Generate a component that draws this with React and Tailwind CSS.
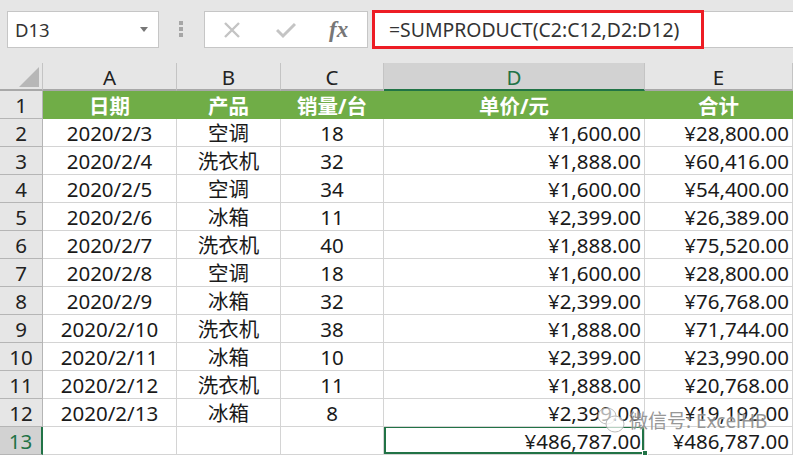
const ROWS = [
  ['2020/2/3', '空调', '18', '¥1,600.00', '¥28,800.00'],
  ['2020/2/4', '洗衣机', '32', '¥1,888.00', '¥60,416.00'],
  ['2020/2/5', '空调', '34', '¥1,600.00', '¥54,400.00'],
  ['2020/2/6', '冰箱', '11', '¥2,399.00', '¥26,389.00'],
  ['2020/2/7', '洗衣机', '40', '¥1,888.00', '¥75,520.00'],
  ['2020/2/8', '空调', '18', '¥1,600.00', '¥28,800.00'],
  ['2020/2/9', '冰箱', '32', '¥2,399.00', '¥76,768.00'],
  ['2020/2/10', '洗衣机', '38', '¥1,888.00', '¥71,744.00'],
  ['2020/2/11', '冰箱', '10', '¥2,399.00', '¥23,990.00'],
  ['2020/2/12', '洗衣机', '11', '¥1,888.00', '¥20,768.00'],
  ['2020/2/13', '冰箱', '8', '¥2,399.00', '¥19,192.00'],
];

const FONT = "font-['Noto_Sans','Noto_Sans_CJK_SC',sans-serif]";
const CELL = 'h-7 pt-[2px] border-r border-b border-[#d4d4d4] flex items-center text-[20.5px] leading-none text-[#1a1a1a] overflow-hidden whitespace-nowrap';
const ROW_HEAD = 'h-7 pt-[2px] bg-[#e6e6e6] border-r border-b border-[#b5b5b5] flex items-center justify-center text-[20.5px] leading-none text-[#222]';
const COL_HEAD = 'h-7 pt-[2px] bg-[#e6e6e6] border-r border-[#c4c4c4] flex items-center justify-center text-[20.5px] leading-none text-[#222] border-b-2 border-b-[#a8a8a8]';
const TITLE = 'h-7 pt-[2px] bg-[#70ad47] border-r border-[#70ad47] flex items-center justify-center text-[20.5px] leading-none font-bold text-white';

function Toolbar() {
  return (
    <div className="h-[63px] bg-[#e6e6e6] flex items-start pt-[11px]">
      {/* Name box */}
      <div className="ml-[7px] w-[152px] h-[37px] bg-white border border-[#c6c6c6] flex items-center justify-between pl-[7px] pr-[10px] text-[18.5px] text-[#333]">
        <span>D13</span>
        <span className="w-0 h-0 border-l-[4px] border-r-[4px] border-t-[5px] border-l-transparent border-r-transparent border-t-[#777]" />
      </div>
      {/* Grip dots */}
      <div className="ml-[20px] mt-[10px] flex flex-col gap-[2px]">
        <span className="w-1 h-1 bg-[#a6a6a6]" />
        <span className="w-1 h-1 bg-[#a6a6a6]" />
        <span className="w-1 h-1 bg-[#a6a6a6]" />
      </div>
      {/* Cancel / confirm / function buttons */}
      <div className="ml-[21px] w-[164px] h-[37px] bg-white border border-[#c6c6c6] relative flex items-center">
        <svg width="18" height="18" viewBox="0 0 18 18" className="ml-[18px]">
          <path d="M2 2 L16 16 M16 2 L2 16" stroke="#c4c4c4" strokeWidth="2.4" fill="none" />
        </svg>
        <svg width="20" height="18" viewBox="0 0 20 18" className="ml-[35px]">
          <path d="M1 9 L7 15 L19 3" stroke="#c4c4c4" strokeWidth="3" fill="none" />
        </svg>
        <span className="ml-[33px] font-['Liberation_Serif',serif] italic font-bold text-[23px] leading-none text-[#777]">fx</span>
      </div>
      {/* Formula bar */}
      <div className="ml-[4px] flex-1 h-[37px] bg-white border-y border-[#c6c6c6] relative">
        <div className="absolute left-0 top-[-2px] w-[332px] h-[39px] border-[3px] border-[#ed1c24] flex items-center pl-[14px] text-[19.4px] text-[#333] whitespace-nowrap">
          =SUMPRODUCT(C2:C12,D2:D12)
        </div>
      </div>
    </div>
  );
}

export default function App() {
  return (
    <div className={`w-[793px] h-[456px] overflow-hidden relative bg-white ${FONT}`}>
      <Toolbar />
      <div className="grid grid-cols-[43px_134px_104px_103px_261px_148px]">
        {/* Column headers */}
        <div className="h-7 bg-[#e6e6e6] border-r border-[#c4c4c4] border-b-2 border-b-[#a8a8a8] flex items-end justify-end pr-[3px] pb-[2px]">
          <svg width="20" height="20" viewBox="0 0 20 20">
            <path d="M20 0 V20 H0 Z" fill="#b7b7b7" />
          </svg>
        </div>
        <div className={COL_HEAD}>A</div>
        <div className={COL_HEAD}>B</div>
        <div className={COL_HEAD}>C</div>
        <div className="h-7 pt-[2px] bg-[#d2d2d2] border-r border-[#c4c4c4] border-b-2 border-b-[#217346] flex items-center justify-center text-[20.5px] leading-none text-[#217346]">D</div>
        <div className={COL_HEAD}>E</div>

        {/* Title row */}
        <div className={ROW_HEAD}>1</div>
        <div className={TITLE}>日期</div>
        <div className={TITLE}>产品</div>
        <div className={TITLE}>销量/台</div>
        <div className={TITLE}>单价/元</div>
        <div className={TITLE}>合计</div>

        {ROWS.map((row, idx) => (
          <div key={row[0]} className="contents">
            <div className={ROW_HEAD}>{idx + 2}</div>
            <div className={`${CELL} justify-center`}>{row[0]}</div>
            <div className={`${CELL} justify-center`}>{row[1]}</div>
            <div className={`${CELL} justify-center`}>{row[2]}</div>
            <div className={`${CELL} justify-end pr-[3px]`}>{row[3]}</div>
            <div className={`${CELL} justify-end pr-[3px]`}>{row[4]}</div>
          </div>
        ))}

        {/* Total row */}
        <div className="h-7 pt-[2px] bg-[#d2d2d2] border-r-2 border-r-[#217346] border-b border-[#b5b5b5] flex items-center justify-center text-[20.5px] leading-none text-[#217346]">13</div>
        <div className={CELL} />
        <div className={CELL} />
        <div className={CELL} />
        <div className={`${CELL} justify-end pr-[3px] relative`}>
          ¥486,787.00
          <span className="absolute inset-0 border-2 border-[#217346] -mt-px" />
        </div>
        <div className={`${CELL} justify-end pr-[3px]`}>¥486,787.00</div>
      </div>

      {/* Fill handle of the selected cell */}
      <span className="absolute left-[642px] top-[450px] w-[6px] h-[6px] bg-[#217346] border border-white" />

      {/* Watermark */}
      <div className="absolute left-[596px] top-[406px] flex items-center gap-[3px] opacity-90">
        <svg width="30" height="30" viewBox="0 0 30 30" fill="#fff" fillOpacity="0.75" stroke="#b5b5b5" strokeWidth="1">
          <ellipse cx="11" cy="10" rx="9" ry="8" />
          <ellipse cx="19" cy="18" rx="9" ry="8" />
        </svg>
        <span className="text-[19px] leading-none text-[#8c8c8c] whitespace-nowrap [text-shadow:0_0_2px_#fff]">微信号: ExcelHB</span>
      </div>
    </div>
  );
}
